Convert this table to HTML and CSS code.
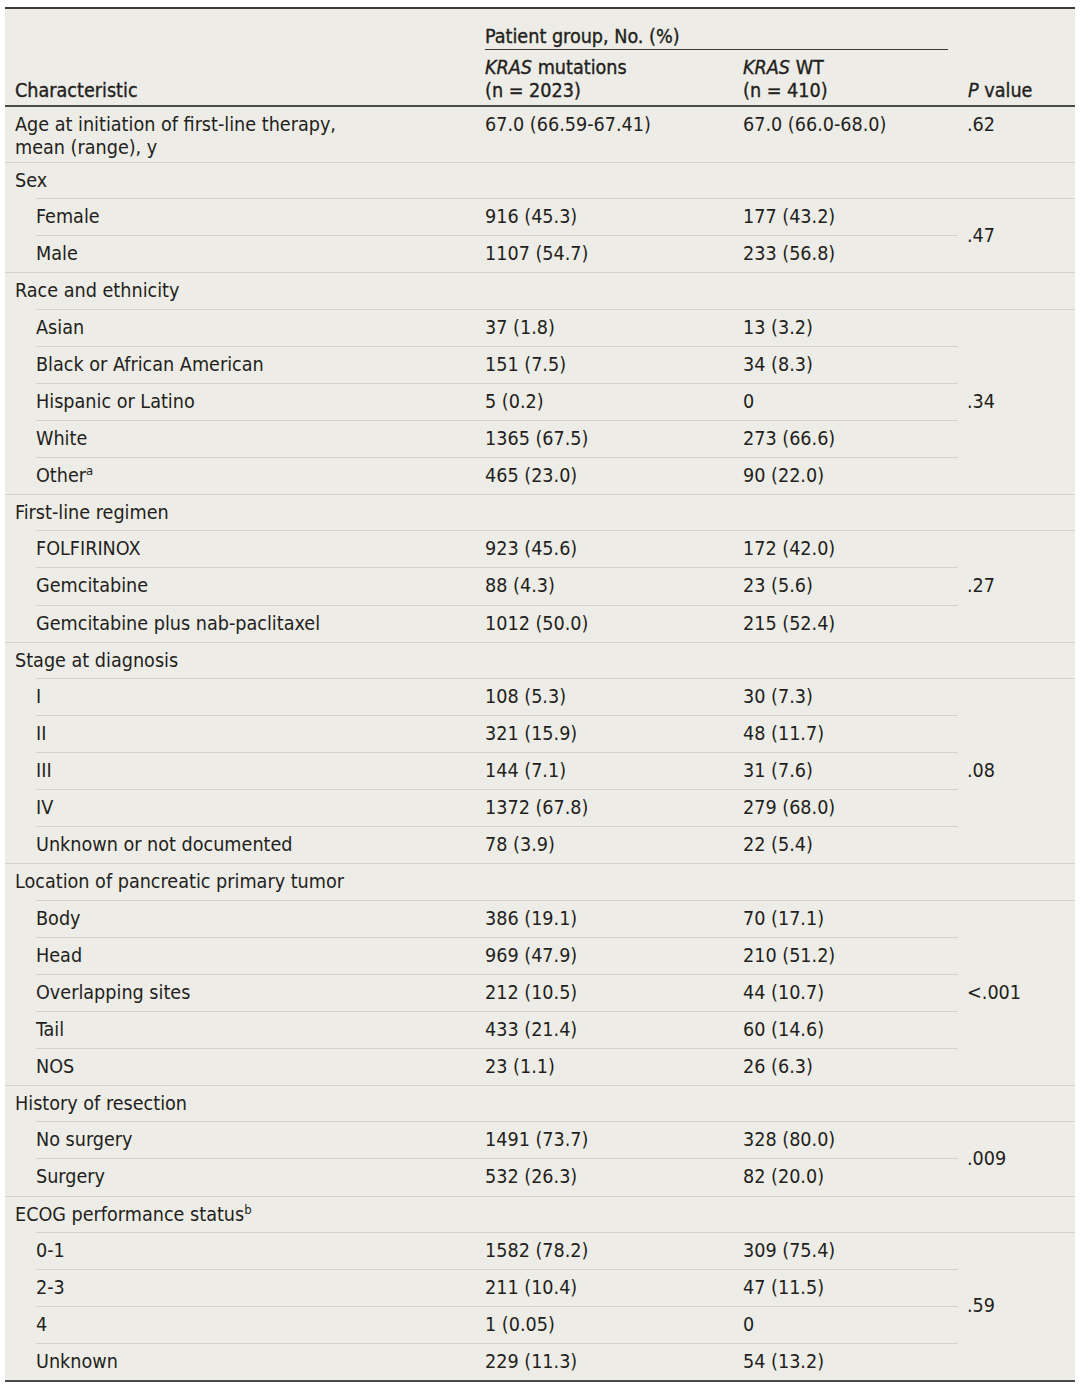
FILE: index.html
```html
<!DOCTYPE html>
<html lang="en">
<head>
<meta charset="utf-8">
<title>Table</title>
<link rel="stylesheet" href="styles.css">
</head>
<body>
<div class="wrap">
<table class="tbl">
<colgroup>
<col class="c-sp"><col class="c-lab"><col class="c-mut"><col class="c-wt"><col class="c-p">
</colgroup>
<thead>
<tr>
<th class="h-char" colspan="2" rowspan="2">Characteristic</th>
<th class="h-grp" colspan="2"><div class="h-grp-in">Patient group, No. (%)</div></th>
<th class="h-p" rowspan="2"><i>P</i> value</th>
</tr>
<tr>
<th class="h-sub"><i>KRAS</i> mutations<br>(n = 2023)</th>
<th class="h-sub"><i>KRAS</i> WT<br>(n = 410)</th>
</tr>
</thead>
<tbody>
<tr class="tall">
<td colspan="2" class="g b">Age at initiation of first-line therapy,<br>mean (range), y</td>
<td class="b">67.0 (66.59-67.41)</td>
<td class="b">67.0 (66.0-68.0)</td>
<td class="b p-top">.62</td>
</tr>

<tr><td colspan="2" class="g gl">Sex</td><td class="b"></td><td class="b"></td><td class="b"></td></tr>
<tr><td class="sp"></td><td class="b">Female</td><td class="b">916 (45.3)</td><td class="b">177 (43.2)</td><td rowspan="2" class="p b">.47</td></tr>
<tr><td class="sp b"></td><td class="b">Male</td><td class="b">1107 (54.7)</td><td class="b">233 (56.8)</td></tr>

<tr><td colspan="2" class="g gl">Race and ethnicity</td><td class="b"></td><td class="b"></td><td class="b"></td></tr>
<tr><td class="sp"></td><td class="b">Asian</td><td class="b">37 (1.8)</td><td class="b">13 (3.2)</td><td rowspan="5" class="p b">.34</td></tr>
<tr><td class="sp"></td><td class="b">Black or African American</td><td class="b">151 (7.5)</td><td class="b">34 (8.3)</td></tr>
<tr><td class="sp"></td><td class="b">Hispanic or Latino</td><td class="b">5 (0.2)</td><td class="b">0</td></tr>
<tr><td class="sp"></td><td class="b">White</td><td class="b">1365 (67.5)</td><td class="b">273 (66.6)</td></tr>
<tr><td class="sp b"></td><td class="b">Other<sup>a</sup></td><td class="b">465 (23.0)</td><td class="b">90 (22.0)</td></tr>

<tr><td colspan="2" class="g gl">First-line regimen</td><td class="b"></td><td class="b"></td><td class="b"></td></tr>
<tr><td class="sp"></td><td class="b">FOLFIRINOX</td><td class="b">923 (45.6)</td><td class="b">172 (42.0)</td><td rowspan="3" class="p b">.27</td></tr>
<tr><td class="sp"></td><td class="b">Gemcitabine</td><td class="b">88 (4.3)</td><td class="b">23 (5.6)</td></tr>
<tr><td class="sp b"></td><td class="b">Gemcitabine plus nab-paclitaxel</td><td class="b">1012 (50.0)</td><td class="b">215 (52.4)</td></tr>

<tr><td colspan="2" class="g gl">Stage at diagnosis</td><td class="b"></td><td class="b"></td><td class="b"></td></tr>
<tr><td class="sp"></td><td class="b">I</td><td class="b">108 (5.3)</td><td class="b">30 (7.3)</td><td rowspan="5" class="p b">.08</td></tr>
<tr><td class="sp"></td><td class="b">II</td><td class="b">321 (15.9)</td><td class="b">48 (11.7)</td></tr>
<tr><td class="sp"></td><td class="b">III</td><td class="b">144 (7.1)</td><td class="b">31 (7.6)</td></tr>
<tr><td class="sp"></td><td class="b">IV</td><td class="b">1372 (67.8)</td><td class="b">279 (68.0)</td></tr>
<tr><td class="sp b"></td><td class="b">Unknown or not documented</td><td class="b">78 (3.9)</td><td class="b">22 (5.4)</td></tr>

<tr><td colspan="2" class="g gl">Location of pancreatic primary tumor</td><td class="b"></td><td class="b"></td><td class="b"></td></tr>
<tr><td class="sp"></td><td class="b">Body</td><td class="b">386 (19.1)</td><td class="b">70 (17.1)</td><td rowspan="5" class="p b">&lt;.001</td></tr>
<tr><td class="sp"></td><td class="b">Head</td><td class="b">969 (47.9)</td><td class="b">210 (51.2)</td></tr>
<tr><td class="sp"></td><td class="b">Overlapping sites</td><td class="b">212 (10.5)</td><td class="b">44 (10.7)</td></tr>
<tr><td class="sp"></td><td class="b">Tail</td><td class="b">433 (21.4)</td><td class="b">60 (14.6)</td></tr>
<tr><td class="sp b"></td><td class="b">NOS</td><td class="b">23 (1.1)</td><td class="b">26 (6.3)</td></tr>

<tr><td colspan="2" class="g gl">History of resection</td><td class="b"></td><td class="b"></td><td class="b"></td></tr>
<tr><td class="sp"></td><td class="b">No surgery</td><td class="b">1491 (73.7)</td><td class="b">328 (80.0)</td><td rowspan="2" class="p b">.009</td></tr>
<tr><td class="sp b"></td><td class="b">Surgery</td><td class="b">532 (26.3)</td><td class="b">82 (20.0)</td></tr>

<tr><td colspan="2" class="g gl">ECOG performance status<sup>b</sup></td><td class="b"></td><td class="b"></td><td class="b"></td></tr>
<tr><td class="sp"></td><td class="b">0-1</td><td class="b">1582 (78.2)</td><td class="b">309 (75.4)</td><td rowspan="4" class="p last">.59</td></tr>
<tr><td class="sp"></td><td class="b">2-3</td><td class="b">211 (10.4)</td><td class="b">47 (11.5)</td></tr>
<tr><td class="sp"></td><td class="b">4</td><td class="b">1 (0.05)</td><td class="b">0</td></tr>
<tr><td class="sp last"></td><td class="last">Unknown</td><td class="last">229 (11.3)</td><td class="last">54 (13.2)</td></tr>
</tbody>
</table>
</div>
</body>
</html>
```

FILE: styles.css
```css
html, body {
  margin: 0;
  padding: 0;
  background: #ffffff;
}

.wrap {
  padding: 7px 5px 0 5px;
}

.tbl {
  width: 1070px;
  table-layout: fixed;
  border-collapse: separate;
  border-spacing: 0;
  background: #edece6;
  border-top: 2px solid #3a3a3a;
  font-family: "DejaVu Sans Condensed", "Liberation Sans Narrow", "Liberation Sans", sans-serif;
  font-size: 19.6px;
  line-height: 23px;
  color: #231f20;
}

.c-sp { width: 31px; }
.c-lab { width: 439px; }
.c-mut { width: 258px; }
.c-wt { width: 225px; }
.c-p { width: 117px; }

th {
  font-weight: normal;
  -webkit-text-stroke: 0.35px #231f20;
  text-align: left;
  padding: 0 10px;
}

.h-char, .h-p {
  vertical-align: bottom;
  padding-bottom: 3px;
  border-bottom: 2px solid #4a4a4a;
}

.h-grp {
  padding: 16px 10px 0 10px;
  vertical-align: bottom;
}

.h-grp-in {
  padding-bottom: 1px;
  border-bottom: 1px solid #3a3a3a;
}

.h-sub {
  vertical-align: bottom;
  padding: 6px 10px 3px 10px;
  border-bottom: 2px solid #4a4a4a;
}

td {
  padding: 6px 10px 7.13px 10px;
  vertical-align: top;
  text-align: left;
  white-space: nowrap;
}

td.sp {
  padding: 0;
}

td.b {
  border-bottom: 1px solid #d2d1ca;
}

tbody tr td.sp + td {
  padding-left: 0;
}

td.g {
  padding-left: 10px;
}

td.gl {
  height: 23px;
  background-image: linear-gradient(#d2d1ca, #d2d1ca);
  background-repeat: no-repeat;
  background-position: 31px 100%;
  background-size: calc(100% - 31px) 1px;
}

tr.tall td {
  padding-bottom: 3px;
}

td.p {
  vertical-align: middle;
  padding-left: 9px;
}

td.p-top {
  padding-left: 9px;
}

td.last {
  border-bottom: 2px solid #4a4a4a;
}

sup {
  font-size: 13px;
  line-height: 0;
  vertical-align: 7px;
}
```
